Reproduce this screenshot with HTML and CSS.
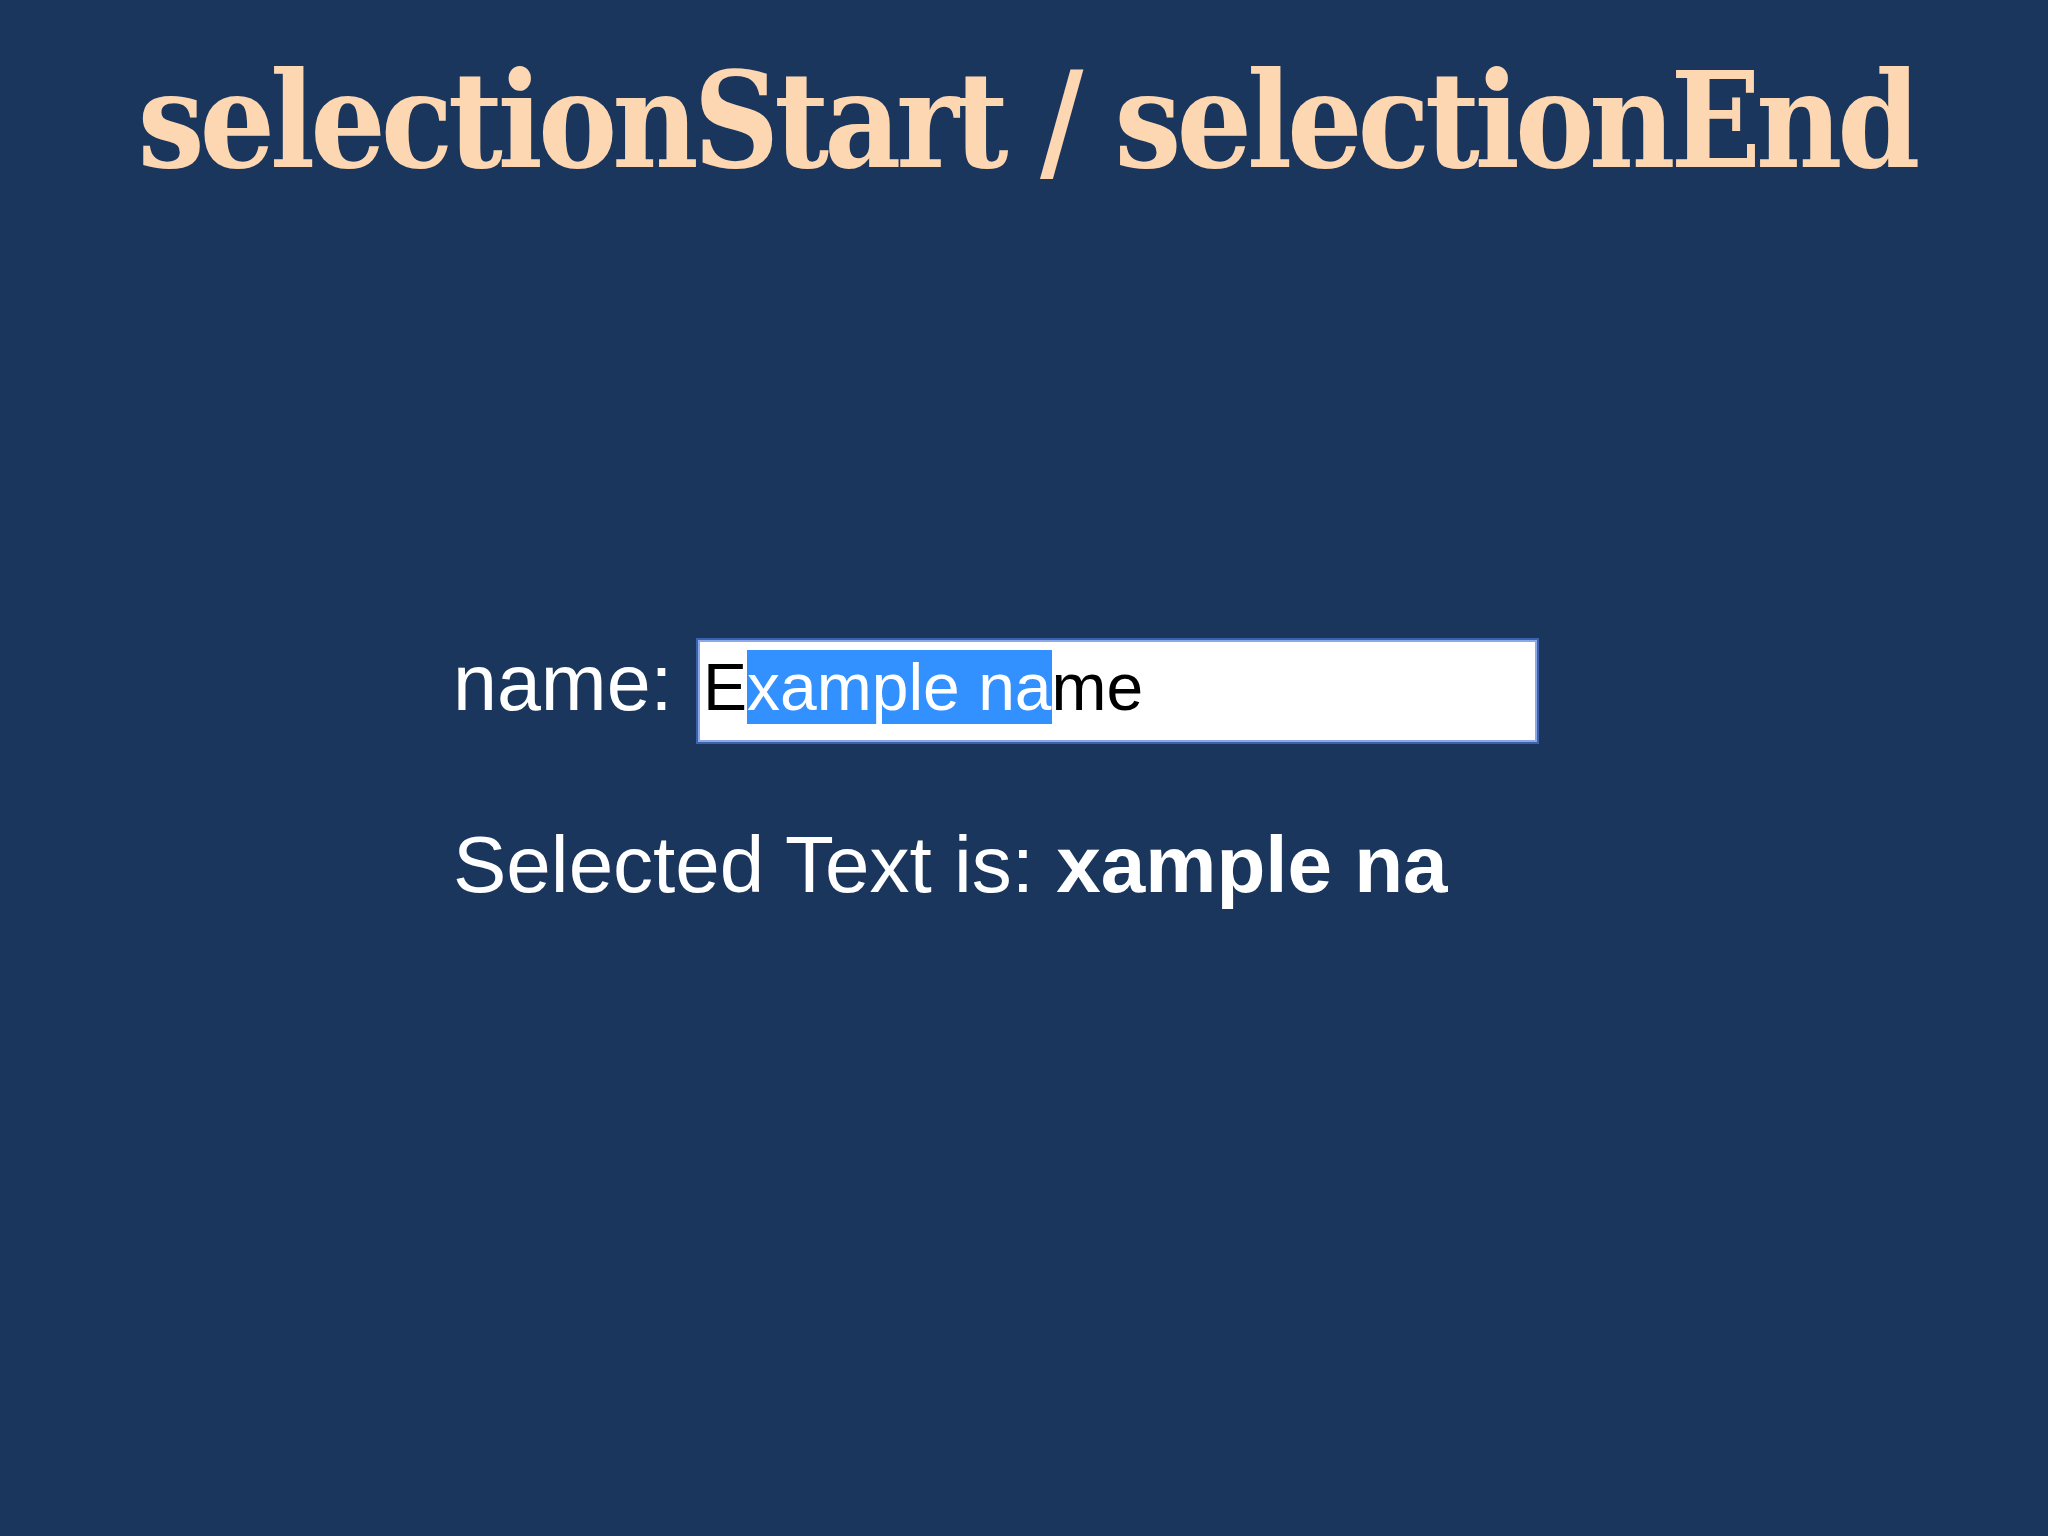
FILE: index.html
```html
<!DOCTYPE html>
<html lang="en">
<head>
<meta charset="utf-8">
<title>selectionStart / selectionEnd</title>
<link rel="stylesheet" href="styles.css">
</head>
<body>
<main class="slide">
  <h1 class="title">selectionStart / selectionEnd</h1>
  <section class="demo">
    <div class="field-row">
      <label class="label" for="name">name:</label>
      <div class="input" id="name"><span class="txt">E<span class="sel">xample na</span>me</span></div>
    </div>
    <p class="result">Selected Text is: <b class="bold">xample na</b></p>
  </section>
</main>
</body>
</html>
```

FILE: styles.css
```css
html, body {
  margin: 0;
  padding: 0;
  background: #1b365d;
}
.slide {
  width: 2048px;
  height: 1536px;
  background: #1b365d;
  overflow: hidden;
}
.title {
  margin: 0;
  padding-top: 41px;
  padding-left: 5px;
  font-family: "DejaVu Serif", serif;
  font-weight: bold;
  font-stretch: condensed;
  font-size: 132px;
  letter-spacing: -5px;
  line-height: 160px;
  color: #fdd6b2;
  text-align: center;
  white-space: nowrap;
}
.demo {
  padding-left: 453px;
  font-family: "Liberation Sans", Arial, sans-serif;
  color: #ffffff;
}
.field-row {
  display: flex;
  align-items: baseline;
  margin-top: 436px;
}
.label {
  font-size: 79px;
  line-height: normal;
  width: 243px;
}
.input {
  box-sizing: border-box;
  width: 843px;
  height: 106px;
  background: #ffffff;
  border: 2px solid #3c62ad;
  box-shadow: inset 0 0 0 2px #8aa9e6;
  padding: 10px 4px 0 5px;
  font-size: 66px;
  line-height: 74px;
  color: #000000;
}
.sel {
  background: #3390ff;
  color: #ffffff;
}
.result {
  margin: 75px 0 0 0;
  font-size: 80px;
  line-height: normal;
}
.bold {
  font-weight: bold;
}
```
